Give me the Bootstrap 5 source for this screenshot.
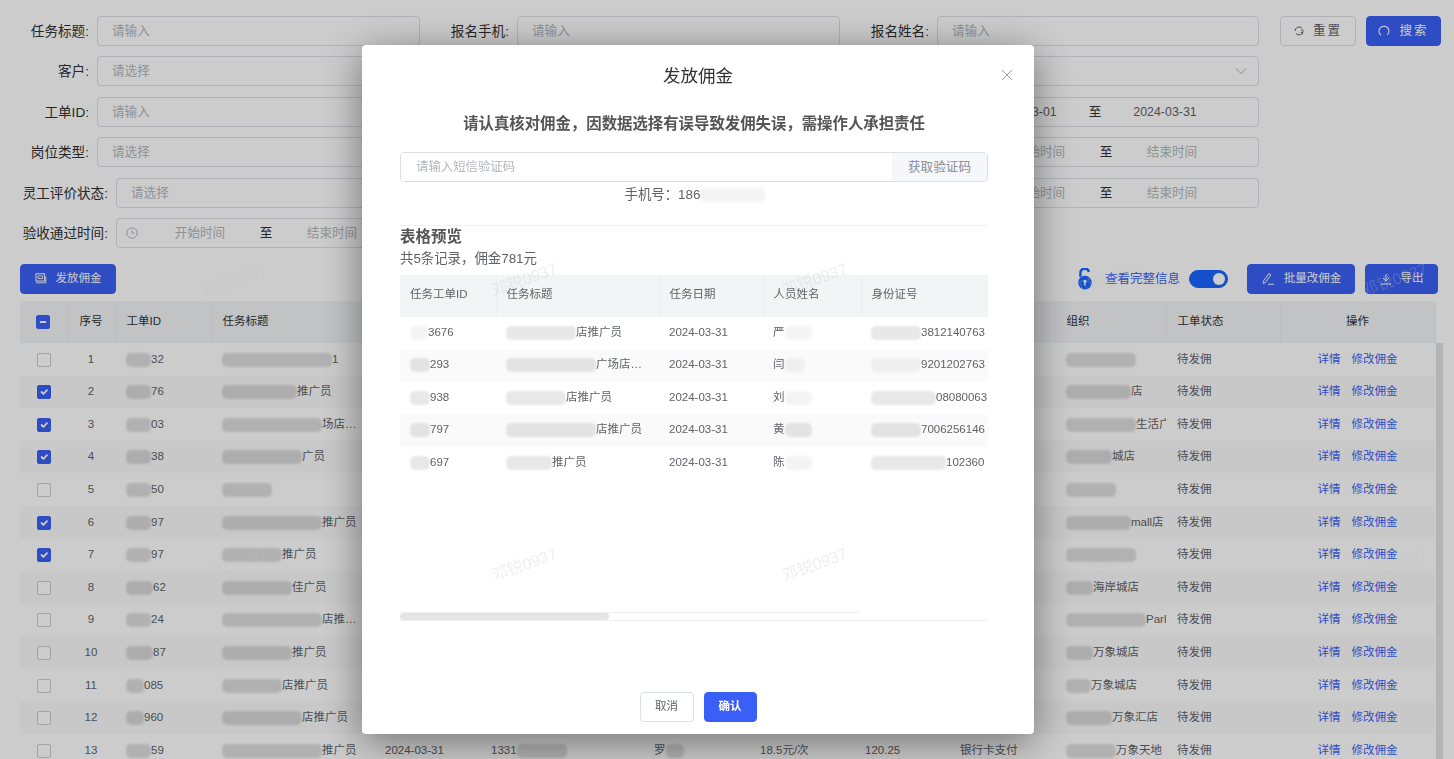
<!DOCTYPE html>
<html lang="zh-CN">
<head>
<meta charset="utf-8">
<title>发放佣金</title>
<link href="https://cdn.jsdelivr.net/npm/bootstrap@5.3.0/dist/css/bootstrap.min.css" rel="stylesheet">
<style>
:root{--brand:#3a5ff6;--line:#dcdfe6;--ink:#606266;}
html,body{height:100%;overflow:hidden;}
body{font-family:"Liberation Sans","Noto Sans CJK SC",sans-serif;font-size:11.5px;color:var(--ink);background:#fff;}
.page-top{padding-top:16px;}
.filters{width:1259px;gap:10.4px;}
.fcell{flex:0 0 420px;height:30px;}
.fcell.last{flex-basis:419px;}
.flabel{flex:0 0 89px;height:30px;margin-right:8px;margin-bottom:0;text-align:right;font-size:13.6px;color:#303133;white-space:nowrap;line-height:31px;}
.flabel.wide{flex-basis:108px;}
.fbox.form-control,.fbox.form-select{height:30px;min-height:30px;padding:0 14px;font-size:12.6px;line-height:28px;border-color:var(--line);border-radius:4px;color:var(--ink);box-shadow:none;}
.fbox::placeholder{color:#b4b6bc;opacity:1;}
.fbox.form-select{background-image:url("data:image/svg+xml,%3Csvg xmlns='http://www.w3.org/2000/svg' viewBox='0 0 12 8'%3E%3Cpath d='M1 1.5l5 5 5-5' fill='none' stroke='%23a8abb2' stroke-width='1'/%3E%3C/svg%3E");background-size:12px 8px;background-position:right 11px center;}
.rng{display:flex;align-items:center;padding:0 0 0 9px!important;}
.rng-ico{flex:0 0 24px;display:flex;color:#b4b6bc;}
.rng-seg{flex:0 0 100px;text-align:center;color:#b4b6bc;}
.rng-seg.dated{flex-basis:108px;color:var(--ink);font-size:12.4px;}
.rng-to{flex:0 0 32px;text-align:center;color:#303133;font-size:12.6px;}
.btn-pg{--bs-btn-font-size:11.5px;--bs-btn-padding-x:0;--bs-btn-padding-y:0;--bs-btn-border-radius:4px;height:30px;display:inline-flex;align-items:center;justify-content:center;gap:9px;white-space:nowrap;}
.btn-solid{--bs-btn-color:#fff;--bs-btn-bg:var(--brand);--bs-btn-border-color:var(--brand);--bs-btn-hover-color:#fff;--bs-btn-hover-bg:var(--brand);}
.btn-line{--bs-btn-color:var(--ink);--bs-btn-bg:#fff;--bs-btn-border-color:var(--line);}
.spaced{--bs-btn-font-size:12.5px;letter-spacing:2px;}
.btn-reset{width:76px;margin-left:21px;}
.btn-search{width:75px;margin-left:10px;}
.btn-pay{width:96px;}
.btn-batch{width:108px;margin-left:19px;}
.btn-export{width:73px;margin-left:10px;}
.bar{margin:16px 16px 7px 20px;height:30px;}
.lock-ico{margin-right:3px;}
.full-info{font-size:12.5px;color:var(--brand);margin:0 9px 0 9px;white-space:nowrap;}
.switch-wrap{padding:0;margin:0;min-height:0;display:flex;}
.switch-wrap .form-check-input{width:39px;height:18px;margin:0;background-color:#1a64ff;border-color:#1a64ff;box-shadow:none;}
.grid-wrap{margin-left:20px;}
.tbl-main{table-layout:fixed;width:1415px;flex:0 0 1415px;margin:0;font-size:11.5px;--bs-table-bg:transparent;--bs-table-color:var(--ink);}
.tbl-main th,.tbl-main td,.tbl-view th,.tbl-view td{padding:0 0 0 11px;vertical-align:middle;white-space:nowrap;overflow:hidden;border:0;}
.tbl-main col:nth-child(1){width:47px}.tbl-main col:nth-child(2){width:48px}.tbl-main col:nth-child(3){width:96px}.tbl-main col:nth-child(4){width:163px}.tbl-main col:nth-child(5){width:106px}.tbl-main col:nth-child(6){width:163px}.tbl-main col:nth-child(7){width:106px}.tbl-main col:nth-child(8){width:105px}.tbl-main col:nth-child(9){width:95px}.tbl-main col:nth-child(10){width:106px}.tbl-main col:nth-child(11){width:111px}.tbl-main col:nth-child(12){width:114px}.tbl-main col:nth-child(13){width:155px}
.tbl-main thead th{height:42px;background:#f3f4f6;font-weight:400;color:#303133;border-right:1px solid #eceef2;}
.tbl-main tbody td{height:32.6px;border:0;}
.tbl-main tbody tr:nth-child(even) td{background:#fafafa;}
.tbl-main th.pin,.tbl-main td.pin{position:relative;box-shadow:-7px 0 7px -5px rgba(0,0,0,.13);}
.tbl-main th.ctr,.tbl-main td.ctr{padding-left:0;text-align:center;}
.tbl-main .form-check-input{width:14px;height:14px;margin:0;border-radius:2px;border-color:#c9ccd3;vertical-align:middle;box-shadow:none;}
.tbl-main .form-check-input:checked,.tbl-main .form-check-input:indeterminate{background-color:var(--brand);border-color:var(--brand);}
.act{color:var(--brand);text-decoration:none;}
.act+.act{margin-left:11px;}
.rail{flex:0 0 7px;margin-top:42px;height:420px;background:#e1e1e1;}
.smr{display:inline-block;height:14px;border-radius:5px;background:rgba(0,0,0,.13);filter:blur(1px);vertical-align:middle;}
.s18{width:18px}.s20{width:20px}.s25{width:25px}.s27{width:27px}.s30{width:30px}.s40{width:40px}.s46{width:46px}.s50{width:50px}.s60{width:60px}.s65{width:65px}.s70{width:70px}.s75{width:75px}.s80{width:80px}.s90{width:90px}.s100{width:100px}.s110{width:110px}
.modal-backdrop{--bs-backdrop-opacity:.2;}
.dlg.modal-dialog{--bs-modal-width:672px;margin:45px 0 0 362px;width:672px;max-width:672px;}
.dlg .modal-content{height:689px;border:0;border-radius:4px;box-shadow:0 8px 40px rgba(0,0,0,.45);color:var(--ink);}
.dlg .smr{background:rgba(0,0,0,.09);}
.dlg .smr.pale{background:rgba(0,0,0,.045);}
.dlg-head{padding:20px 0 0;height:68px;position:relative;justify-content:center;align-items:flex-start;}
.dlg-title{font-size:17.5px;line-height:22px;color:#303133;font-weight:400;}
.dlg-close{position:absolute;top:24px;right:21px;padding:0;width:12px;height:12px;border:0;background:none;display:flex;color:#9a9da5;}
.dlg-body{padding:0 46px 0 38px;}
.warn{font-size:15.4px;font-weight:700;line-height:22px;text-align:center;color:#555;margin-bottom:17px;}
.code-group{height:30px;border:1px solid var(--line);border-radius:4px;overflow:hidden;}
.code-group .form-control{border:0;height:28px;min-height:28px;padding:0 15px;font-size:12.4px;border-radius:0;box-shadow:none;}
.code-group .form-control::placeholder{color:#b4b6bc;opacity:1;}
.code-btn{flex:0 0 95px;border:0;background:#f5f7fa;color:#8a8d94;font-size:12.6px;padding:0;}
.phone{font-size:13.4px;line-height:18px;margin-top:4px;text-align:center;padding-left:2px;}
.sep{margin:21px 0 0;border:0;border-top:1px solid #eef0f4;opacity:1;}
.pv-title{font-size:15.5px;font-weight:700;line-height:22px;color:#555;margin:0;}
.pv-sum{font-size:13.4px;line-height:18px;margin:2px 0 7px;}
.pv-wrap{height:337px;overflow:hidden;}
.tbl-view{table-layout:fixed;width:640px;margin:0;font-size:11.5px;--bs-table-bg:transparent;--bs-table-color:var(--ink);}
.pv-c1{width:96px}.pv-c2{width:163px}.pv-c3{width:104px}.pv-c4{width:98px}.pv-c5{width:179px}
.tbl-view thead th{height:42px;background:#f3f4f6;font-weight:400;padding:0 0 2px 10px;border-right:1px solid #eceef2;}
.tbl-view tbody td{height:32.6px;padding:0 0 2px 10px;}
.tbl-view tbody tr:nth-child(even) td{background:#fafafa;}
.pv-rail{width:460px;border-top:1px solid #eef0f4;height:8px;}
.pv-thumb{width:209px;height:7px;background:#e4e4e4;border-radius:4px;}
.pv-end{border-top:1px solid #eef0f4;}
.dlg-foot{padding:0 0 12px;justify-content:center;gap:10px;}
.dlg-foot>*{margin:0;}
.btn-cancel{width:54px;}
.btn-ok{width:53px;font-weight:700;}
.wm-layer{position:fixed;inset:0;z-index:1100;pointer-events:none;display:grid;grid-template-columns:repeat(5,290px);grid-auto-rows:285px;padding:137px 0 0 90px;align-items:center;justify-items:center;overflow:hidden;}
.wm-text{font-size:16px;color:rgba(190,190,190,.25);transform:rotate(-20deg);white-space:nowrap;}
.icons-src{width:0;height:0;}
</style>
</head>
<body>
<svg class="icons-src d-block position-absolute">
  <symbol id="i-clock" viewBox="0 0 12 12"><circle cx="6" cy="6" r="5.2" fill="none" stroke="currentColor"/><path d="M6 3v3.2h2.6" fill="none" stroke="currentColor"/></symbol>
</svg>
<div class="page-top d-flex">
  <div class="filters d-flex flex-column">
    <div class="d-flex">
      <div class="fcell d-flex"><label class="flabel">任务标题:</label><input class="form-control fbox" placeholder="请输入"></div>
      <div class="fcell d-flex"><label class="flabel">报名手机:</label><input class="form-control fbox" placeholder="请输入"></div>
      <div class="fcell last d-flex"><label class="flabel">报名姓名:</label><input class="form-control fbox" placeholder="请输入"></div>
    </div>
    <div class="d-flex">
      <div class="fcell d-flex"><label class="flabel">客户:</label><input class="form-control fbox" placeholder="请选择"></div>
      <div class="fcell"></div>
      <div class="fcell last d-flex"><span class="flabel"></span><select class="form-select fbox"><option></option></select></div>
    </div>
    <div class="d-flex">
      <div class="fcell d-flex"><label class="flabel">工单ID:</label><input class="form-control fbox" placeholder="请输入"></div>
      <div class="fcell"></div>
      <div class="fcell last d-flex"><span class="flabel"></span><div class="form-control fbox rng"><span class="rng-ico"></span><span class="rng-seg dated">2024-03-01</span><span class="rng-to">至</span><span class="rng-seg dated">2024-03-31</span></div></div>
    </div>
    <div class="d-flex">
      <div class="fcell d-flex"><label class="flabel">岗位类型:</label><input class="form-control fbox" placeholder="请选择"></div>
      <div class="fcell"></div>
      <div class="fcell last d-flex"><span class="flabel wide"></span><div class="form-control fbox rng"><span class="rng-ico"><svg width="12" height="12"><use href="#i-clock"/></svg></span><span class="rng-seg">开始时间</span><span class="rng-to">至</span><span class="rng-seg">结束时间</span></div></div>
    </div>
    <div class="d-flex">
      <div class="fcell d-flex"><label class="flabel wide">灵工评价状态:</label><input class="form-control fbox" placeholder="请选择"></div>
      <div class="fcell"></div>
      <div class="fcell last d-flex"><span class="flabel wide"></span><div class="form-control fbox rng"><span class="rng-ico"><svg width="12" height="12"><use href="#i-clock"/></svg></span><span class="rng-seg">开始时间</span><span class="rng-to">至</span><span class="rng-seg">结束时间</span></div></div>
    </div>
    <div class="d-flex">
      <div class="fcell d-flex"><label class="flabel wide">验收通过时间:</label><div class="form-control fbox rng"><span class="rng-ico"><svg width="12" height="12"><use href="#i-clock"/></svg></span><span class="rng-seg">开始时间</span><span class="rng-to">至</span><span class="rng-seg">结束时间</span></div></div>
    </div>
  </div>
  <div class="d-flex align-items-start">
    <button class="btn btn-line btn-pg btn-reset spaced"><svg width="10" height="10" viewBox="0 0 10 10"><path d="M1 5a4 4 0 0 1 7.2-2.4M9 5a4 4 0 0 1-7 2.6" fill="none" stroke="currentColor"/><path d="M7 4.2h2.6M8.6 8.4V6.4H6.6" fill="none" stroke="currentColor" stroke-width=".8"/></svg>重置</button>
    <button class="btn btn-solid btn-pg btn-search spaced"><svg width="12" height="12" viewBox="0 0 12 12"><path d="M3 10.2A5 5 0 1 1 9.4 9.8" fill="none" stroke="currentColor" stroke-width="1.1"/></svg>搜索</button>
  </div>
</div>

<div class="bar d-flex align-items-center">
  <button class="btn btn-solid btn-pg btn-pay"><svg width="12" height="11" viewBox="0 0 12 11"><rect x="1" y=".8" width="8.6" height="7.2" fill="none" stroke="currentColor"/><path d="M3 3h4.6v2.6H3zM1 9.8h10.4M10.8 3.4v6" fill="none" stroke="currentColor" stroke-width=".9"/></svg>发放佣金</button>
  <div class="ms-auto d-flex align-items-center">
    <svg class="lock-ico" width="16" height="22" viewBox="0 0 16 22"><path d="M3.4 9V5a4.4 4.4 0 0 1 8.6-1.2" fill="none" stroke="#1a64ff" stroke-width="2.4"/><circle cx="8" cy="14.6" r="6.8" fill="#1a64ff"/><circle cx="8" cy="13.2" r="1.5" fill="#fff"/><rect x="7.3" y="13.6" width="1.4" height="3.8" fill="#fff"/></svg>
    <a class="full-info text-decoration-none" href="#">查看完整信息</a>
    <div class="form-check form-switch switch-wrap"><input class="form-check-input" type="checkbox" role="switch" checked></div>
    <button class="btn btn-solid btn-pg btn-batch"><svg width="14" height="13" viewBox="0 0 14 13"><path d="M2.4 9.2L7.8 1.6l2 1.4-5.4 7.6-2.2.8zM7 12.2h6" fill="none" stroke="currentColor"/></svg>批量改佣金</button>
    <button class="btn btn-solid btn-pg btn-export"><svg width="12" height="12" viewBox="0 0 12 12"><path d="M6 1v6.6M3 5l3 3 3-3M.8 11h10.4" fill="none" stroke="currentColor"/></svg>导出</button>
  </div>
</div>

<div class="grid-wrap d-flex align-items-start">
  <table class="table tbl-main">
    <colgroup><col><col><col><col><col><col><col><col><col><col><col><col><col></colgroup>
    <thead>
      <tr><th class="ctr"><input id="allrows" class="form-check-input" type="checkbox" aria-label="全选"></th><th class="ctr">序号</th><th>工单ID</th><th>任务标题</th><th colspan="6"></th><th>组织</th><th class="pin">工单状态</th><th class="ctr">操作</th></tr>
    </thead>
    <tbody>
      <tr><td class="ctr"><input class="form-check-input" type="checkbox"></td><td class="ctr">1</td><td><span class="smr s25"></span>32</td><td><span class="smr s110"></span>1</td><td colspan="6"></td><td><span class="smr s70"></span></td><td class="pin">待发佣</td><td class="ctr"><a class="act" href="#">详情</a><a class="act" href="#">修改佣金</a></td></tr>
      <tr><td class="ctr"><input class="form-check-input" type="checkbox" checked></td><td class="ctr">2</td><td><span class="smr s25"></span>76</td><td><span class="smr s75"></span>推广员</td><td colspan="6"></td><td><span class="smr s65"></span>店</td><td class="pin">待发佣</td><td class="ctr"><a class="act" href="#">详情</a><a class="act" href="#">修改佣金</a></td></tr>
      <tr><td class="ctr"><input class="form-check-input" type="checkbox" checked></td><td class="ctr">3</td><td><span class="smr s25"></span>03</td><td><span class="smr s100"></span>场店…</td><td colspan="6"></td><td><span class="smr s70"></span>生活广</td><td class="pin">待发佣</td><td class="ctr"><a class="act" href="#">详情</a><a class="act" href="#">修改佣金</a></td></tr>
      <tr><td class="ctr"><input class="form-check-input" type="checkbox" checked></td><td class="ctr">4</td><td><span class="smr s25"></span>38</td><td><span class="smr s80"></span>广员</td><td colspan="6"></td><td><span class="smr s46"></span>城店</td><td class="pin">待发佣</td><td class="ctr"><a class="act" href="#">详情</a><a class="act" href="#">修改佣金</a></td></tr>
      <tr><td class="ctr"><input class="form-check-input" type="checkbox"></td><td class="ctr">5</td><td><span class="smr s25"></span>50</td><td><span class="smr s50"></span></td><td colspan="6"></td><td><span class="smr s50"></span></td><td class="pin">待发佣</td><td class="ctr"><a class="act" href="#">详情</a><a class="act" href="#">修改佣金</a></td></tr>
      <tr><td class="ctr"><input class="form-check-input" type="checkbox" checked></td><td class="ctr">6</td><td><span class="smr s25"></span>97</td><td><span class="smr s100"></span>推广员</td><td colspan="6"></td><td><span class="smr s65"></span>mall店</td><td class="pin">待发佣</td><td class="ctr"><a class="act" href="#">详情</a><a class="act" href="#">修改佣金</a></td></tr>
      <tr><td class="ctr"><input class="form-check-input" type="checkbox" checked></td><td class="ctr">7</td><td><span class="smr s25"></span>97</td><td><span class="smr s60"></span>推广员</td><td colspan="6"></td><td><span class="smr s70"></span></td><td class="pin">待发佣</td><td class="ctr"><a class="act" href="#">详情</a><a class="act" href="#">修改佣金</a></td></tr>
      <tr><td class="ctr"><input class="form-check-input" type="checkbox"></td><td class="ctr">8</td><td><span class="smr s27"></span>62</td><td><span class="smr s70"></span>佳广员</td><td colspan="6"></td><td><span class="smr s27"></span>海岸城店</td><td class="pin">待发佣</td><td class="ctr"><a class="act" href="#">详情</a><a class="act" href="#">修改佣金</a></td></tr>
      <tr><td class="ctr"><input class="form-check-input" type="checkbox"></td><td class="ctr">9</td><td><span class="smr s25"></span>24</td><td><span class="smr s100"></span>店推…</td><td colspan="6"></td><td><span class="smr s80"></span>Park</td><td class="pin">待发佣</td><td class="ctr"><a class="act" href="#">详情</a><a class="act" href="#">修改佣金</a></td></tr>
      <tr><td class="ctr"><input class="form-check-input" type="checkbox"></td><td class="ctr">10</td><td><span class="smr s27"></span>87</td><td><span class="smr s70"></span>推广员</td><td colspan="6"></td><td><span class="smr s27"></span>万象城店</td><td class="pin">待发佣</td><td class="ctr"><a class="act" href="#">详情</a><a class="act" href="#">修改佣金</a></td></tr>
      <tr><td class="ctr"><input class="form-check-input" type="checkbox"></td><td class="ctr">11</td><td><span class="smr s18"></span>085</td><td><span class="smr s60"></span>店推广员</td><td colspan="6"></td><td><span class="smr s25"></span>万象城店</td><td class="pin">待发佣</td><td class="ctr"><a class="act" href="#">详情</a><a class="act" href="#">修改佣金</a></td></tr>
      <tr><td class="ctr"><input class="form-check-input" type="checkbox"></td><td class="ctr">12</td><td><span class="smr s18"></span>960</td><td><span class="smr s80"></span>店推广员</td><td colspan="6"></td><td><span class="smr s46"></span>万象汇店</td><td class="pin">待发佣</td><td class="ctr"><a class="act" href="#">详情</a><a class="act" href="#">修改佣金</a></td></tr>
      <tr><td class="ctr"><input class="form-check-input" type="checkbox"></td><td class="ctr">13</td><td><span class="smr s25"></span>59</td><td><span class="smr s100"></span>推广员</td><td>2024-03-31</td><td>1331<span class="smr s50"></span></td><td>罗<span class="smr s18"></span></td><td>18.5元/次</td><td>120.25</td><td>银行卡支付</td><td><span class="smr s50"></span>万象天地</td><td class="pin">待发佣</td><td class="ctr"><a class="act" href="#">详情</a><a class="act" href="#">修改佣金</a></td></tr>
    </tbody>
  </table>
  <div class="rail"></div>
</div>

<div class="modal-backdrop show"></div>
<div class="modal d-block" tabindex="-1">
  <div class="modal-dialog dlg">
    <div class="modal-content">
      <div class="modal-header dlg-head border-0">
        <h5 class="modal-title dlg-title">发放佣金</h5>
        <button class="dlg-close" type="button" aria-label="关闭"><svg width="12" height="12" viewBox="0 0 12 12"><path d="M1 1l10 10M11 1L1 11" stroke="currentColor" fill="none"/></svg></button>
      </div>
      <div class="modal-body dlg-body">
        <div class="warn">请认真核对佣金，因数据选择有误导致发佣失误，需操作人承担责任</div>
        <div class="code-group d-flex"><input class="form-control" placeholder="请输入短信验证码"><button class="code-btn" type="button">获取验证码</button></div>
        <div class="phone">手机号：186<span class="smr pale s65"></span></div>
        <hr class="sep">
        <h6 class="pv-title">表格预览</h6>
        <p class="pv-sum">共5条记录，佣金781元</p>
        <div class="pv-wrap">
          <table class="table tbl-view">
            <colgroup><col class="pv-c1"><col class="pv-c2"><col class="pv-c3"><col class="pv-c4"><col class="pv-c5"></colgroup>
            <thead><tr><th>任务工单ID</th><th>任务标题</th><th>任务日期</th><th>人员姓名</th><th>身份证号</th></tr></thead>
            <tbody>
              <tr><td><span class="smr pale s18"></span>3676</td><td><span class="smr s70"></span>店推广员</td><td>2024-03-31</td><td>严<span class="smr pale s27"></span></td><td><span class="smr s50"></span>3812140763</td></tr>
              <tr><td><span class="smr s20"></span>293</td><td><span class="smr s90"></span>广场店…</td><td>2024-03-31</td><td>闫<span class="smr pale s20"></span></td><td><span class="smr pale s50"></span>9201202763</td></tr>
              <tr><td><span class="smr s20"></span>938</td><td><span class="smr s60"></span>店推广员</td><td>2024-03-31</td><td>刘<span class="smr pale s27"></span></td><td><span class="smr s65"></span>08080063</td></tr>
              <tr><td><span class="smr s20"></span>797</td><td><span class="smr s90"></span>店推广员</td><td>2024-03-31</td><td>黄<span class="smr s27"></span></td><td><span class="smr s50"></span>7006256146</td></tr>
              <tr><td><span class="smr s20"></span>697</td><td><span class="smr s46"></span>推广员</td><td>2024-03-31</td><td>陈<span class="smr pale s27"></span></td><td><span class="smr s75"></span>102360</td></tr>
            </tbody>
          </table>
        </div>
        <div class="pv-rail"><div class="pv-thumb"></div></div>
        <div class="pv-end"></div>
      </div>
      <div class="modal-footer dlg-foot border-0">
        <button class="btn btn-line btn-pg btn-cancel" type="button">取消</button>
        <button class="btn btn-solid btn-pg btn-ok" type="button">确认</button>
      </div>
    </div>
  </div>
</div>

<div class="wm-layer">
  <span class="wm-text">邓锐0937</span><span class="wm-text">邓锐0937</span><span class="wm-text">邓锐0937</span><span class="wm-text">邓锐0937</span><span class="wm-text">邓锐0937</span>
  <span class="wm-text">邓锐0937</span><span class="wm-text">邓锐0937</span><span class="wm-text">邓锐0937</span><span class="wm-text">邓锐0937</span><span class="wm-text">邓锐0937</span>
</div>
<script src="https://cdn.jsdelivr.net/npm/bootstrap@5.3.0/dist/js/bootstrap.bundle.min.js"></script>
<script>document.getElementById('allrows').indeterminate=true;</script>
</body>
</html>
